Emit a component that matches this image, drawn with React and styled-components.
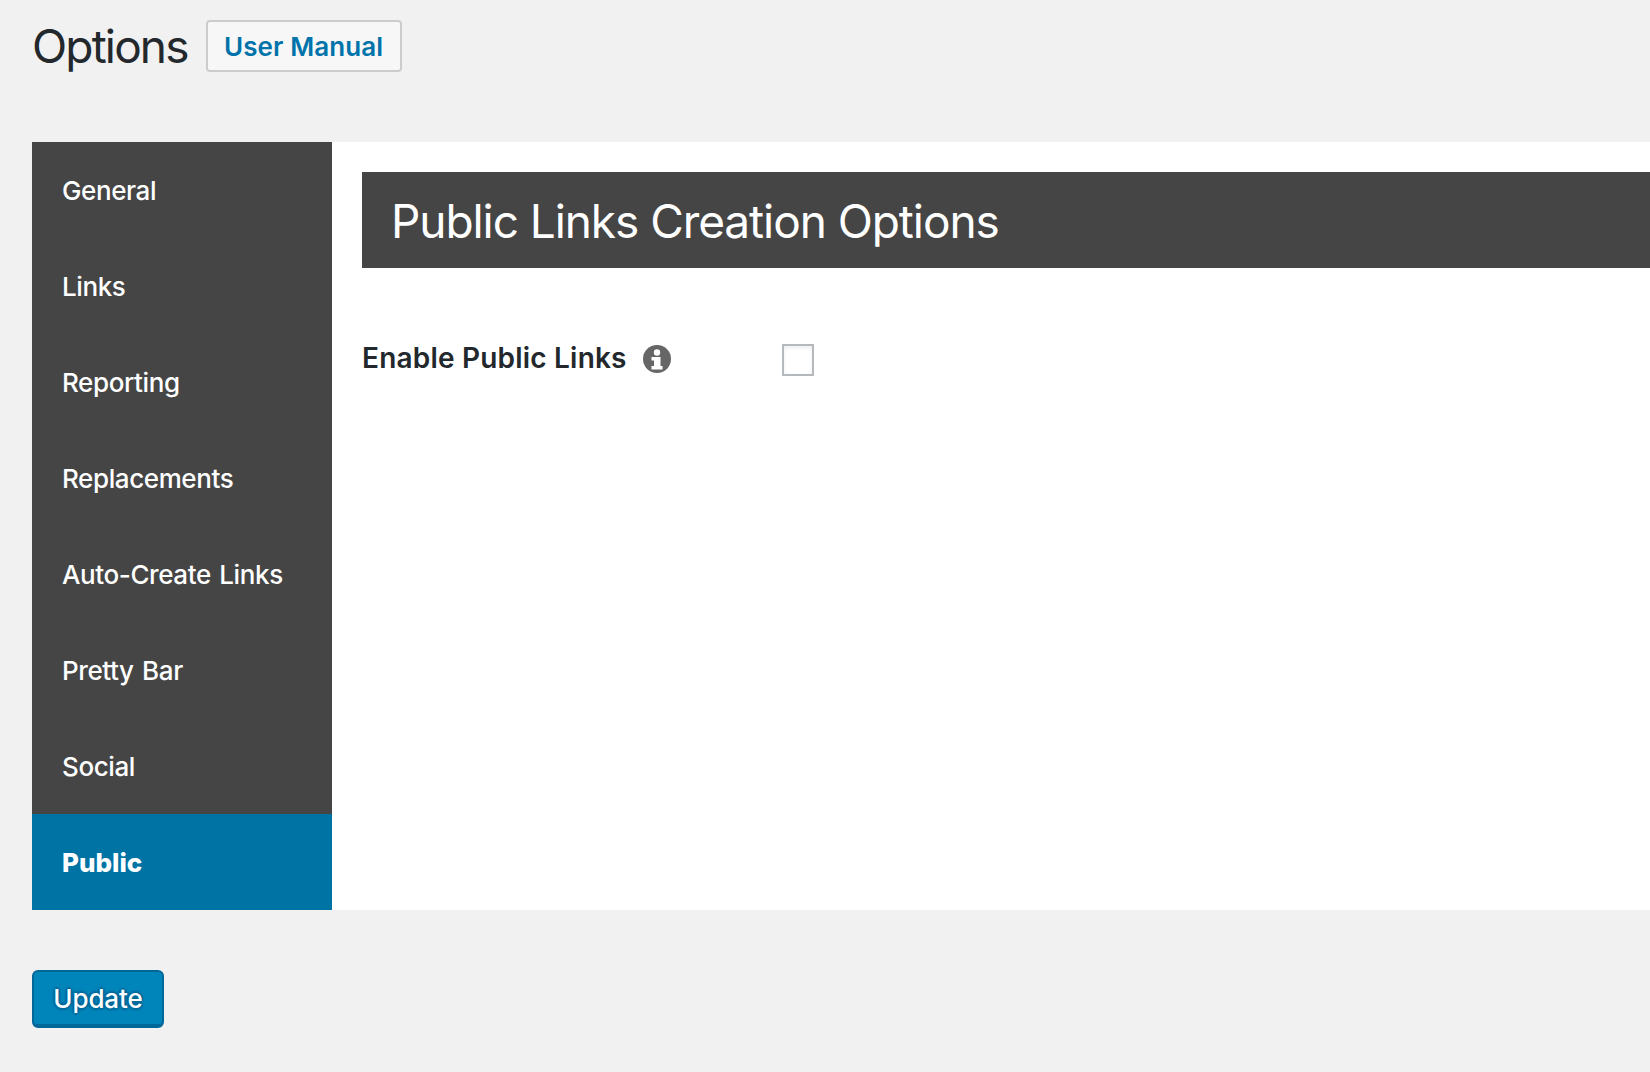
import React from 'react'
import styled, { createGlobalStyle } from 'styled-components'

const GlobalStyle = createGlobalStyle`
  html, body {
    margin: 0;
    padding: 0;
    background: #f1f1f1;
    font-family: Inter, "Liberation Sans", sans-serif;
    color: #23282d;
    overflow: hidden;
  }
`

const Page = styled.div`
  width: 1650px;
  height: 1072px;
  padding: 20px 0 0 32px;
  box-sizing: border-box;
  overflow: hidden;
`

const Header = styled.header`
  display: flex;
  align-items: center;
  height: 52px;
  gap: 18px;
`

const PageTitle = styled.h1`
  margin: 0;
  font-size: 46px;
  font-weight: 400;
  line-height: 52px;
  letter-spacing: -1.85px;
`

const ManualButton = styled.a`
  box-sizing: border-box;
  width: 196px;
  height: 52px;
  display: flex;
  align-items: center;
  justify-content: center;
  border: 2px solid #ccc;
  border-radius: 4px;
  background: #f7f7f7;
  color: #0073aa;
  font-size: 26px;
  font-weight: 600;
  letter-spacing: 0.1px;
`

const Panel = styled.div`
  display: flex;
  height: 768px;
  margin-top: 70px;
  background: #fff;
`

const Sidebar = styled.nav`
  flex: 0 0 300px;
  display: flex;
  flex-direction: column;
  background: #454545;
`

const NavItem = styled.a`
  height: 96px;
  box-sizing: border-box;
  padding: 33px 0 0 30px;
  font-size: 26px;
  line-height: 32px;
  color: #fff;
  font-weight: ${(p) => (p.$active ? 800 : 500)};
  letter-spacing: ${(p) => (p.$active ? '0' : '-0.4px')};
  word-spacing: 2px;
  background: ${(p) => (p.$active ? '#0073a5' : 'transparent')};
`

const Content = styled.main`
  flex: 1;
  padding: 30px 0 0 30px;
`

const SectionTitle = styled.h2`
  margin: 0;
  height: 96px;
  box-sizing: border-box;
  padding: 2px 0 0 29px;
  display: flex;
  align-items: center;
  background: #454545;
  color: #fff;
  font-size: 46px;
  font-weight: 400;
  letter-spacing: -1.07px;
`

const OptionRow = styled.div`
  display: flex;
  align-items: flex-start;
  margin-top: 75px;
  height: 32px;
`

const OptionLabel = styled.label`
  display: flex;
  align-items: center;
  gap: 16px;
  width: 420px;
  height: 30px;
  font-size: 28px;
  font-weight: 600;
  letter-spacing: 0.2px;
`

const InfoGlyph = styled.svg`
  flex: none;
  margin-top: 2px;
`

const Checkbox = styled.span`
  box-sizing: border-box;
  width: 32px;
  height: 32px;
  margin-top: 1px;
  border: 2px solid #b4b9be;
  background: #fff;
  box-shadow: inset 0 2px 4px rgba(0, 0, 0, 0.07);
`

const UpdateButton = styled.button`
  display: block;
  box-sizing: border-box;
  width: 132px;
  height: 58px;
  margin-top: 60px;
  padding: 0;
  border: 2px solid #006799;
  border-bottom-width: 4px;
  border-radius: 6px;
  background: #0085ba;
  color: #fff;
  font-family: inherit;
  font-size: 26px;
  font-weight: 500;
  letter-spacing: -0.1px;
  text-shadow: 0 -2px 2px #006799, 2px 0 2px #006799, 0 2px 2px #006799, -2px 0 2px #006799;
`

const InfoIcon = () => (
  <InfoGlyph width="28" height="28" viewBox="0 0 28 28" aria-hidden="true">
    <circle cx="14" cy="14" r="14" fill="#666" />
    <circle cx="14" cy="7.5" r="3.2" fill="#fff" />
    <path d="M8.5 12h9v9h2v3.500h-11v-3.500h2.500v-5.500h-2.500z" fill="#fff" />
  </InfoGlyph>
)

const tabs = ['General', 'Links', 'Reporting', 'Replacements', 'Auto-Create Links', 'Pretty Bar', 'Social', 'Public']

export default function App() {
  return (
    <Page>
      <GlobalStyle />
      <Header>
        <PageTitle>Options</PageTitle>
        <ManualButton>User Manual</ManualButton>
      </Header>
      <Panel>
        <Sidebar>
          {tabs.map((tab) => (
            <NavItem key={tab} $active={tab === 'Public'}>{tab}</NavItem>
          ))}
        </Sidebar>
        <Content>
          <SectionTitle>Public Links Creation Options</SectionTitle>
          <OptionRow>
            <OptionLabel>Enable Public Links <InfoIcon /></OptionLabel>
            <Checkbox />
          </OptionRow>
        </Content>
      </Panel>
      <UpdateButton>Update</UpdateButton>
    </Page>
  )
}
